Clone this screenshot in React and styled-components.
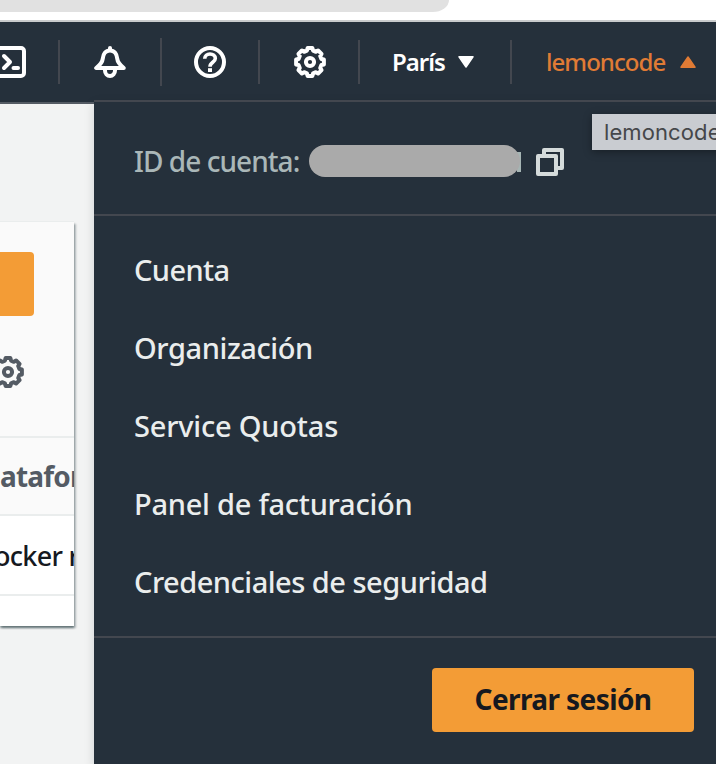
import React from "react";
import styled, { createGlobalStyle } from "styled-components";

const GlobalStyle = createGlobalStyle`
  *, *::before, *::after { box-sizing: border-box; }
  body { margin: 0; background: #f2f3f3; font-family: "Noto Sans", "Open Sans", sans-serif; overflow: hidden; }
  button { font: inherit; border: 0; padding: 0; background: none; color: inherit; }
  svg { display: block; flex: none; }
`;

const Page = styled.div`
  position: relative;
  display: flex;
  flex-direction: column;
  width: 716px;
  height: 764px;
  overflow: hidden;
  background: #f2f3f3;
`;

const BrowserStrip = styled.div`
  flex: none;
  height: 22px;
  background: #fff;
  border-bottom: 2px solid #c9cbcc;
`;

const AddressBar = styled.div`
  width: 449px;
  height: 12px;
  background: #e1e1e1;
  border-bottom-right-radius: 30px 22px;
`;

const NavBar = styled.nav`
  flex: none;
  display: grid;
  grid-template-columns: 60px 102px 98px 100px 152px 204px;
  height: 82px;
  background: #25303b;
  border-bottom: 2px solid #545b64;
`;

const NavItem = styled.button`
  display: flex;
  align-items: center;
  justify-content: flex-start;
  padding-left: ${(p) => p.$inset}px;
  height: 80px;
  color: ${(p) => (p.$active ? "#e07b35" : "#fff")};
  font-size: 24px;
  font-weight: ${(p) => (p.$active ? 500 : 600)};
  letter-spacing: ${(p) => p.$tracking || 0}px;
  min-width: 0;

  &::after {
    content: "";
    display: ${(p) => (p.$last ? "none" : "block")};
    width: 2px;
    height: ${(p) => (p.$tall ? 48 : 44)}px;
    margin-left: auto;
    background: #43474f;
  }
`;

const TerminalSlot = styled.span`
  margin-left: -6px;
`;

const NavLabel = styled.span`
  width: ${(p) => p.$width}px;
  line-height: 34px;
  text-align: left;
  white-space: nowrap;
`;

const Content = styled.main`
  flex: 1;
  padding-top: 118px;
`;

const Card = styled.section`
  width: 74px;
  height: 404px;
  background: #fff;
  box-shadow: 0 2px 2px rgba(0, 28, 36, 0.45), 2px 2px 2px rgba(0, 28, 36, 0.25), 0 -1px 0 #eaeded;
`;

const CardTools = styled.div`
  display: flex;
  flex-direction: column;
  gap: 40px;
  height: 216px;
  padding-top: 30px;
  background: #fafafa;
  border-bottom: 2px solid #eaeded;
  overflow: hidden;
`;

const PrimaryStub = styled.button`
  flex: none;
  width: 34px;
  height: 64px;
  background: #f39c36;
  border-radius: 0 4px 4px 0;
`;

const GearSlot = styled.span`
  margin-left: -8px;
  color: #545b64;
`;

const Cell = styled.div`
  display: flex;
  align-items: center;
  height: ${(p) => (p.$head ? 78 : 80)}px;
  background: ${(p) => (p.$head ? "#fafafa" : "#fff")};
  border-bottom: 2px solid #eaeded;
  color: ${(p) => (p.$head ? "#545b64" : "#16191f")};
  font-size: ${(p) => (p.$head ? 28 : 27)}px;
  font-weight: ${(p) => (p.$head ? 700 : 500)};
  letter-spacing: ${(p) => (p.$head ? -0.8 : -0.7)}px;
  white-space: nowrap;
  overflow: hidden;
`;

const CellText = styled.span`
  margin-left: ${(p) => p.$shift}px;
`;

const Menu = styled.aside`
  position: absolute;
  left: 94px;
  top: 100px;
  width: 622px;
  height: 664px;
  display: flex;
  flex-direction: column;
  background: #25303b;
  border-top: 2px solid #43474f;
  box-shadow: 0 4px 10px rgba(0, 28, 36, 0.14);
`;

const AccountRow = styled.div`
  display: flex;
  align-items: center;
  height: 114px;
  padding: 6px 0 0 40px;
  border-bottom: 2px solid #43474f;
  color: #aab7b8;
  font-size: 28px;
  font-weight: 500;

  & > svg {
    margin-top: 2px;
  }
`;

const AccountLabel = styled.span`
  width: 175px;
  letter-spacing: -0.95px;
  white-space: nowrap;
`;

const Redaction = styled.span`
  width: 212px;
  height: 32px;
  margin-right: 15px;
  background: linear-gradient(#a6b5b4, #a6b5b4) right 0 top 7px / 4px 20px no-repeat;

  &::before {
    content: "";
    display: block;
    width: 211px;
    height: 32px;
    border-radius: 16px;
    background: #aaaaaa;
  }
`;

const LinkList = styled.ul`
  list-style: none;
  margin: 0;
  padding: 14px 0 0 40px;
  height: 422px;
  border-bottom: 2px solid #43474f;
`;

const LinkItem = styled.li`
  display: flex;
  align-items: center;
  height: 78px;
  color: #eaeded;
  font-size: 29px;
  font-weight: 500;
  letter-spacing: ${(p) => p.$tracking}px;
  white-space: nowrap;
`;

const MenuFooter = styled.div`
  display: flex;
  justify-content: flex-end;
  padding: 30px 22px 0 0;
`;

const SignOut = styled.button`
  width: 262px;
  height: 64px;
  padding-bottom: 2px;
  border-radius: 4px;
  background: #f39c36;
  color: #16191f;
  font-size: 28px;
  font-weight: 700;
  letter-spacing: -0.6px;
`;

const Tooltip = styled.div`
  position: absolute;
  left: 592px;
  top: 114px;
  width: 140px;
  height: 36px;
  padding-left: 12px;
  background: #c9ccd1;
  color: #45474a;
  font-family: Inter, sans-serif;
  font-size: 22px;
  line-height: 37px;
  letter-spacing: 0.1px;
  box-shadow: 0 2px 8px rgba(0, 0, 0, 0.35);
`;

const gearOutline = Array.from({ length: 8 }, (_, k) => {
  const at = (deg, r) => {
    const a = ((k * 45 + deg) * Math.PI) / 180;
    return `${(16 + r * Math.sin(a)).toFixed(2)} ${(16 - r * Math.cos(a)).toFixed(2)}`;
  };
  return `${k ? "L" : "M"}${at(-10, 14.1)}L${at(10, 14.1)}L${at(15, 11.8)}L${at(30, 11.8)}`;
}).join("") + "Z";

const GearIcon = () => (
  <svg width="32" height="32" viewBox="0 0 32 32" fill="none" stroke="currentColor" strokeWidth="4">
    <path d={gearOutline} strokeLinejoin="round" />
    <circle cx="16" cy="16" r="4.1" />
  </svg>
);

const TerminalIcon = () => (
  <svg width="32" height="32" viewBox="0 0 32 32" fill="none" stroke="currentColor" strokeWidth="4" strokeLinecap="round" strokeLinejoin="round">
    <rect x="2" y="2" width="28" height="28" rx="3" />
    <path d="M10 10l6 6-6 6M19.500 22h4.500" />
  </svg>
);

const BellIcon = () => (
  <svg width="32" height="32" viewBox="0 0 32 32" fill="none" stroke="currentColor" strokeWidth="4" strokeLinejoin="round">
    <path d="M16 2v2" strokeLinecap="round" />
    <path d="M16 4.500c-4.500 0-6.800 3.600-7.200 8-.4 4-2.900 6.600-6.600 9.500h27.600c-3.700-2.900-6.200-5.500-6.600-9.500-.4-4.400-2.700-8-7.200-8z" />
    <path d="M11 23v1.500a5 5.500 0 0 0 10 0V23" />
  </svg>
);

const HelpIcon = () => (
  <svg width="32" height="32" viewBox="0 0 32 32" fill="none" stroke="currentColor" strokeWidth="4">
    <circle cx="16" cy="16" r="14" />
    <path d="M10.700 12.800c0-3 2.300-4.800 5.300-4.800s5.300 1.700 5.300 4.400c0 3.900-5.300 3.800-5.300 8.300" strokeWidth="3.600" />
    <path d="M14 24.100h4" strokeWidth="3.800" />
  </svg>
);

const CopyIcon = () => (
  <svg width="28" height="28" viewBox="0 0 28 28" fill="none" stroke="#d5dbdb" strokeWidth="4" strokeLinejoin="round">
    <rect x="2" y="8" width="18" height="18" />
    <path d="M8 6V2h18v18h-4" />
  </svg>
);

const Caret = ({ up }) => (
  <svg width="16" height="12" viewBox="0 0 16 12" fill="currentColor" stroke="currentColor" strokeWidth="1.500" strokeLinejoin="round">
    <path d={up ? "M1 11.200h14L8 1z" : "M1 .8h14L8 11z"} />
  </svg>
);

const links = [
  ["Cuenta", -0.6],
  ["Organización", -0.4],
  ["Service Quotas", -0.2],
  ["Panel de facturación", -0.25],
  ["Credenciales de seguridad", -0.5],
];

export default function App() {
  return (
    <Page>
      <GlobalStyle />
      <BrowserStrip>
        <AddressBar />
      </BrowserStrip>
      <NavBar>
        <NavItem $inset={0} aria-label="CloudShell">
          <TerminalSlot><TerminalIcon /></TerminalSlot>
        </NavItem>
        <NavItem $inset={34} $tall aria-label="Notificaciones"><BellIcon /></NavItem>
        <NavItem $inset={32} aria-label="Ayuda"><HelpIcon /></NavItem>
        <NavItem $inset={34} aria-label="Configuración"><GearIcon /></NavItem>
        <NavItem $inset={32} $tracking={-1}>
          <NavLabel $width={66}>París</NavLabel>
          <Caret />
        </NavItem>
        <NavItem $inset={34} $tracking={-0.95} $active $last>
          <NavLabel $width={134}>lemoncode</NavLabel>
          <Caret up />
        </NavItem>
      </NavBar>
      <Content>
        <Card>
          <CardTools>
            <PrimaryStub aria-label="Crear" />
            <GearSlot><GearIcon /></GearSlot>
          </CardTools>
          <Cell $head><CellText $shift={0}>atafor</CellText></Cell>
          <Cell><CellText $shift={-6}>ocker r</CellText></Cell>
        </Card>
      </Content>
      <Menu>
        <AccountRow>
          <AccountLabel>ID de cuenta:</AccountLabel>
          <Redaction />
          <CopyIcon />
        </AccountRow>
        <LinkList>
          {links.map(([label, tracking]) => (
            <LinkItem key={label} $tracking={tracking}>{label}</LinkItem>
          ))}
        </LinkList>
        <MenuFooter>
          <SignOut>Cerrar sesión</SignOut>
        </MenuFooter>
      </Menu>
      <Tooltip>lemoncode</Tooltip>
    </Page>
  );
}
